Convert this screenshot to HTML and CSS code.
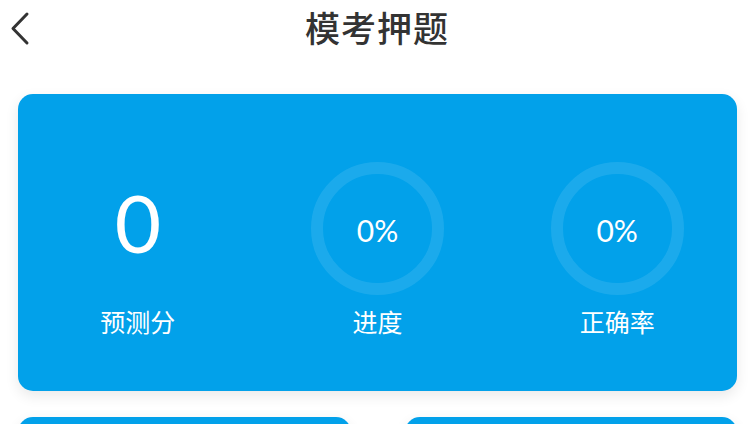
FILE: index.html
```html
<!DOCTYPE html>
<html lang="zh-CN">
<head>
<meta charset="utf-8">
<title>模考押题</title>
<link rel="stylesheet" href="styles.css">
</head>
<body>
<div class="page">
  <header class="topbar">
    <span class="back" aria-label="返回">
      <svg width="22" height="36" viewBox="0 0 22 36"><path d="M17 3 L3 17.5 L17 32" fill="none" stroke="#333" stroke-width="3" stroke-linecap="round" stroke-linejoin="round"/></svg>
    </span>
    <h1 class="title">模考押题</h1>
  </header>
  <main class="content">
    <section class="stats-card">
      <div class="stat">
        <div class="stat-top"><span class="score">0</span></div>
        <div class="stat-label">预测分</div>
      </div>
      <div class="stat">
        <div class="stat-top ring"><span class="pct">0%</span></div>
        <div class="stat-label">进度</div>
      </div>
      <div class="stat">
        <div class="stat-top ring"><span class="pct">0%</span></div>
        <div class="stat-label">正确率</div>
      </div>
    </section>
    <section class="tiles">
      <div class="tile"></div>
      <div class="tile"></div>
    </section>
  </main>
</div>
</body>
</html>
```

FILE: styles.css
```css
* { box-sizing: border-box; }
html, body { margin: 0; padding: 0; background: #fff; }
body {
  font-family: "Noto Sans CJK SC", "Noto Sans", sans-serif;
}
.page {
  height: 424px;
  overflow: hidden;
}
.topbar {
  height: 54px;
  display: flex;
  align-items: center;
  justify-content: center;
  position: relative;
}
.back {
  position: absolute;
  left: 10px;
  top: 11px;
  width: 22px;
  height: 36px;
}
.back svg { display: block; }
.title {
  margin: 0;
  font-size: 35px;
  font-weight: 500;
  color: #333;
  line-height: 54px;
  letter-spacing: 1px;
}
.content {
  padding: 40px 17px 0 18px;
}
.stats-card {
  background: #02a1ea;
  border-radius: 15px;
  height: 297px;
  display: grid;
  grid-template-columns: repeat(3, 1fr);
  padding-top: 68px;
  box-shadow: 0 5px 14px rgba(0, 0, 0, 0.09);
}
.stat {
  display: flex;
  flex-direction: column;
  align-items: center;
}
.stat-top {
  width: 133px;
  height: 133px;
  display: flex;
  align-items: center;
  justify-content: center;
}
.ring {
  border-radius: 50%;
  border: 12.5px solid rgba(255, 255, 255, 0.1);
}
.score {
  font-family: Lato, Roboto, sans-serif;
  font-weight: 400;
  font-size: 80px;
  line-height: 1;
  color: #fff;
  margin-bottom: 14px;
}
.pct {
  font-family: Lato, Roboto, sans-serif;
  font-weight: 400;
  font-size: 30px;
  line-height: 1;
  color: #fff;
  margin-top: 2px;
}
.stat-label {
  margin-top: 11px;
  font-size: 25px;
  line-height: 30px;
  color: #fff;
}
.tiles {
  margin-top: 26px;
  display: grid;
  grid-template-columns: 1fr 1fr;
  gap: 54px;
}
.tile {
  height: 120px;
  background: #02a1ea;
  border-radius: 15px;
  box-shadow: 0 5px 14px rgba(0, 0, 0, 0.09);
}
```
